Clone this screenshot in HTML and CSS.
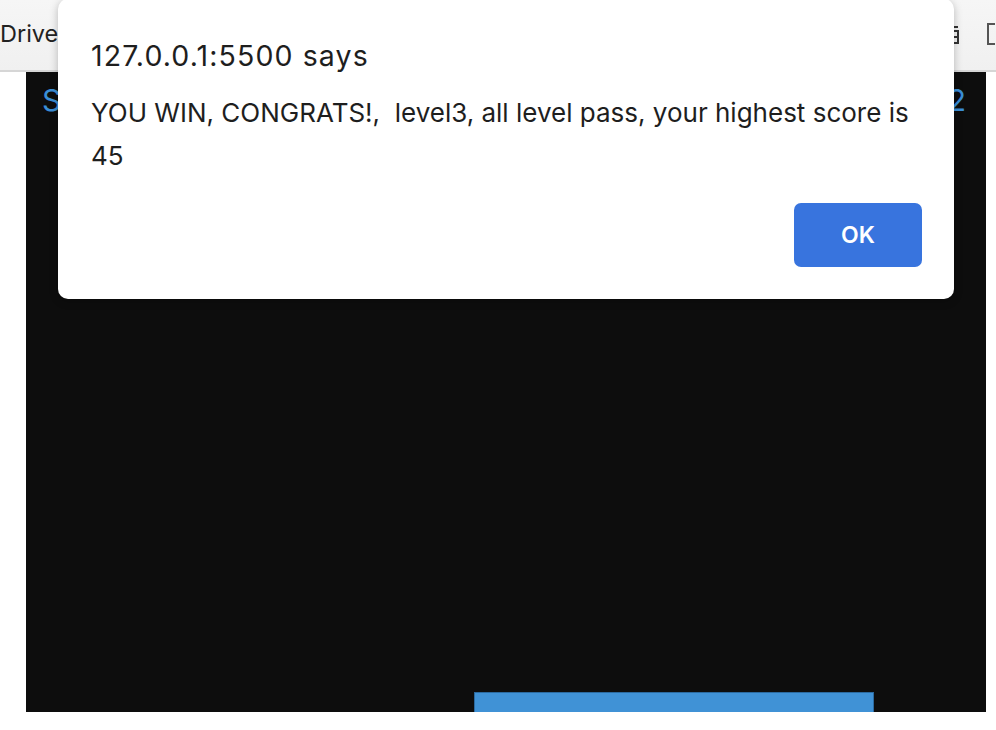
FILE: index.html
```html
<!DOCTYPE html>
<html>
<head>
<meta charset="utf-8">
<link rel="stylesheet" href="styles.css">
</head>
<body>
<div class="toolbar">
  <span class="bm">Drive</span>
  <span class="tb-icons">
    <svg class="ic1" width="14" height="22" viewBox="0 0 14 22"><path d="M2 4h10M2 8h10v12H2zM7 8v12M2 14h10" fill="none" stroke="#333" stroke-width="2"/></svg>
    <svg class="ic2" width="10" height="24" viewBox="0 0 10 24"><path d="M9 2H2v20h7" fill="none" stroke="#555" stroke-width="2"/></svg>
  </span>
</div>
<div class="stage">
  <div class="game">
    <div class="hud"><span>S</span><span>2</span></div>
    <div class="paddle"></div>
  </div>
</div>
<div class="dialog">
  <div class="d-title">127.0.0.1:5500 says</div>
  <div class="d-msg">YOU WIN, CONGRATS!,&nbsp; level3, all level pass, your highest score is 45</div>
  <div class="d-actions"><button class="ok">OK</button></div>
</div>
</body>
</html>
```
FILE: styles.css
```css
html, body { margin: 0; padding: 0; }
body {
  width: 996px; height: 730px; overflow: hidden; background: #fff;
  font-family: Inter, "Liberation Sans", Arial, sans-serif; position: relative;
}
.toolbar {
  height: 70px; border-bottom: 2px solid #d6d6d6;
  background: linear-gradient(#f6f6f6, #f0f0f0);
  display: flex; justify-content: space-between; align-items: center;
}
.bm { font-size: 23.5px; color: #222; margin-top: -4px; }
.tb-icons { display: flex; gap: 26px; align-items: center; margin-top: -2px; }
.stage { padding: 0 10px 0 26px; }
.game {
  height: 640px; background: #0d0d0d; position: relative; overflow: hidden;
}
.hud {
  display: flex; justify-content: space-between; padding: 10px 20px 0 16px;
  color: #3a8ed6; font-size: 30px;
}
.paddle {
  position: absolute; left: 448px; top: 620px; width: 398px; height: 30px;
  background: #4092d6; border: 1px solid #2b6aa0;
}
.dialog {
  position: absolute; left: 58px; top: -1px; width: 896px; height: 300px;
  background: #fff; border-radius: 10px; box-sizing: border-box;
  padding: 41px 32px 0 33px; color: #1e1e1e;
  box-shadow: 0 2px 8px rgba(0,0,0,0.25);
}
.d-title { font-size: 28.5px; line-height: 32px; letter-spacing: 1.1px; }
.d-msg { font-size: 26px; line-height: 43px; margin-top: 19px; }
.d-actions { display: flex; justify-content: flex-end; margin-top: 26px; }
.ok {
  width: 128px; height: 64px; background: #3874de; color: #fff; border: none;
  border-radius: 7px; font-family: inherit; font-weight: 600; font-size: 23px;
}
```
